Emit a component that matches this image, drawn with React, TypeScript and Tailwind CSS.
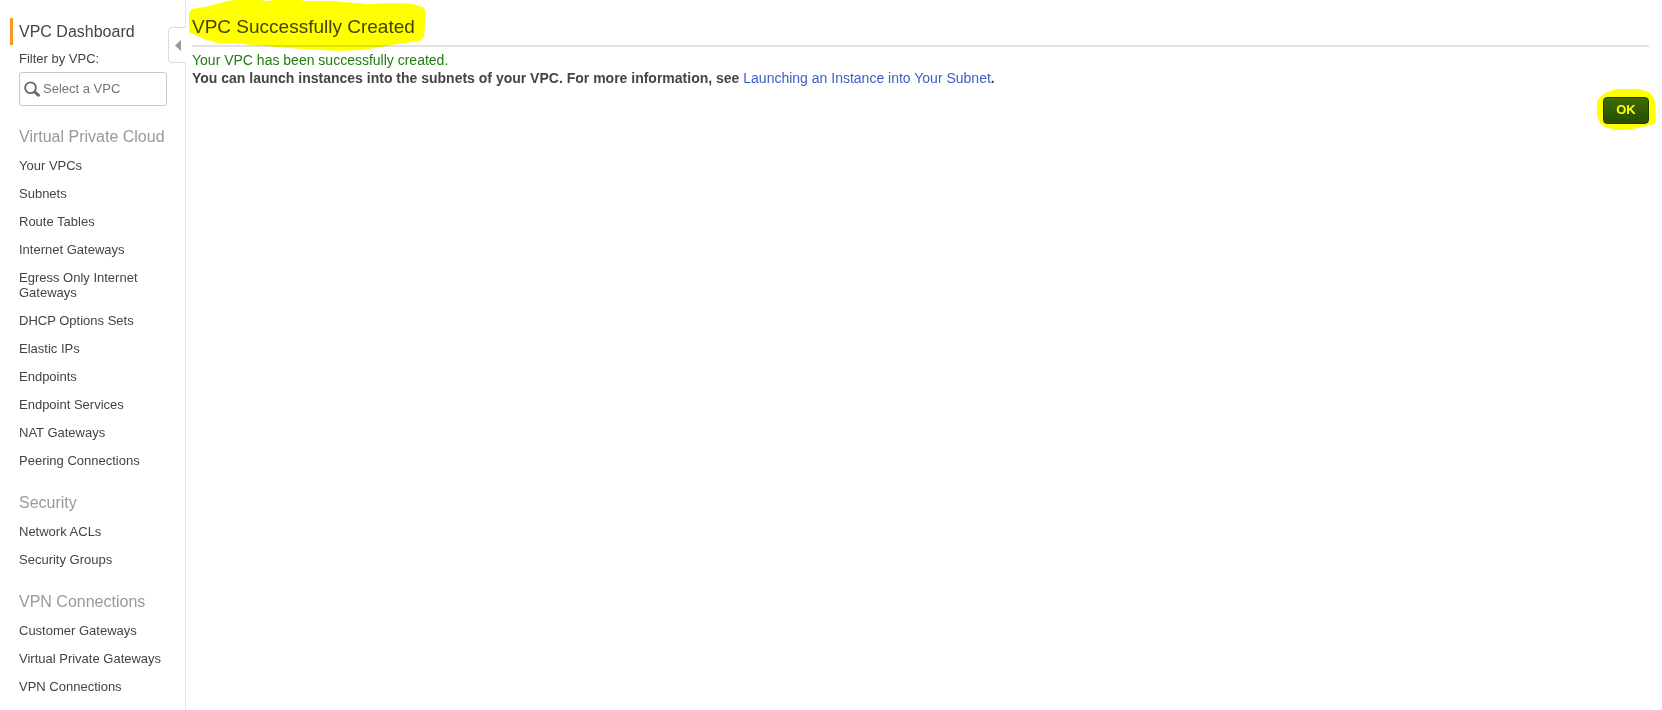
const sections = [
  {
    title: "Virtual Private Cloud",
    items: [
      "Your VPCs",
      "Subnets",
      "Route Tables",
      "Internet Gateways",
      "Egress Only Internet Gateways",
      "DHCP Options Sets",
      "Elastic IPs",
      "Endpoints",
      "Endpoint Services",
      "NAT Gateways",
      "Peering Connections",
    ],
  },
  { title: "Security", items: ["Network ACLs", "Security Groups"] },
  {
    title: "VPN Connections",
    items: ["Customer Gateways", "Virtual Private Gateways", "VPN Connections"],
  },
];

function Sidebar() {
  return (
    <aside className="relative w-[186px] shrink-0 border-r border-[#e8e8e8] pt-[18px]">
      <a
        href="#dashboard"
        className="ml-[10px] flex h-[27px] items-center border-l-[3px] border-[#f7981f] pl-[6px] text-base"
      >
        VPC Dashboard
      </a>
      <div className="pr-[18px] pl-[19px]">
        <label htmlFor="vpc-filter" className="mt-[6px] block text-[13px] leading-[16px]">
          Filter by VPC:
        </label>
        <div className="mt-[5px] flex h-[34px] items-center gap-[3px] rounded-[3px] border border-[#c8c8c8] pl-[4px]">
          <svg viewBox="0 0 16 16" className="size-4 shrink-0" fill="none" stroke="#666" aria-hidden="true">
            <circle cx="6.5" cy="6.8" r="5.4" strokeWidth="1.8" />
            <path d="M10.8 11 L14.3 14.2" strokeWidth="3" strokeLinecap="round" />
          </svg>
          <input
            id="vpc-filter"
            type="text"
            placeholder="Select a VPC"
            className="w-full min-w-0 bg-transparent text-[13px] outline-none placeholder:text-[#757575]"
          />
        </div>
      </div>
      <nav className="mt-[21px] flex flex-col gap-[25px] pr-[18px] pl-[19px]">
        {sections.map((section) => (
          <section key={section.title}>
            <h2 className="-mr-[10px] text-base leading-[20px] text-[#999]">{section.title}</h2>
            <ul className="mt-[11px] flex flex-col gap-[13px] text-[13px] leading-[15px]">
              {section.items.map((item) => (
                <li key={item}>
                  <a href="#nav" className="block hover:underline">
                    {item}
                  </a>
                </li>
              ))}
            </ul>
          </section>
        ))}
      </nav>
      <button
        type="button"
        aria-label="Collapse sidebar"
        className="absolute top-[27px] -right-px flex h-[36px] w-[18px] items-center justify-center rounded-l border border-r-0 border-[#dcdcdc] bg-white"
      >
        <svg viewBox="0 0 6 11" className="h-[11px] w-[6px]" fill="#999" aria-hidden="true">
          <path d="M6 0 V11 L0 5.5 Z" />
        </svg>
      </button>
    </aside>
  );
}

export default function App() {
  return (
    <div className="flex min-h-screen bg-white font-['Liberation_Sans',Arial,sans-serif] text-[#444]">
      <Sidebar />
      <main className="min-w-0 flex-1 pt-[15px] pr-[13px] pl-[6px] text-sm leading-[18px]">
        <header className="relative border-b-2 border-[#e2e2e2] pb-[6px]">
          <h1 className="text-[19px] leading-[24px]">VPC Successfully Created</h1>
          <svg
            viewBox="0 0 236 51"
            className="pointer-events-none absolute -top-[15px] -left-[3px] h-[51px] w-[236px] mix-blend-multiply"
            fill="#ff0"
            aria-hidden="true"
          >
            <path d="M0 13 L3 9 L16 7 L28 4 L39 1 L46 0 H73 L76 1 H79 L84 0 H112 L116 1 H146 L153 2 L169 3 L178 4 L209 3 L223 4 L234 7 L236 10 V23 L235 37 L231 41 L209 44 L186 48 L173 50 L149 51 L116 49 L99 48 L76 46 L63 45 L43 43 H28 L13 38 L6 35 L0 32 Z" />
          </svg>
        </header>
        <p className="mt-[4px] text-[#1e7e0c]">Your VPC has been successfully created.</p>
        <p className="font-bold">
          You can launch instances into the subnets of your VPC. For more information, see{" "}
          <a href="#launching" className="font-normal text-[#3b5fc4] hover:underline">
            Launching an Instance into Your Subnet
          </a>
          .
        </p>
        <div className="mt-[10px] flex justify-end">
          <div className="relative">
            <button
              type="button"
              className="block h-[27px] w-[46px] rounded border border-[#1f3d00] bg-linear-to-b from-[#3f6b00] to-[#284d00] pb-[2px] text-[13px] font-bold text-white"
            >
              OK
            </button>
            <svg
              viewBox="0 0 59 41"
              className="pointer-events-none absolute -top-[8px] -left-[6px] h-[41px] w-[59px] max-w-none mix-blend-multiply"
              fill="#ff0"
              aria-hidden="true"
            >
              <path d="M0 12 L3 8 L8 4 L16 1 L22 0 L42 0 L52 3 L56 8 L58 13 L59 32 L57 35 L50 37 L40 39 L32 41 L18 41 L8 38 L3 34 L0 27 Z" />
            </svg>
          </div>
        </div>
      </main>
    </div>
  );
}
